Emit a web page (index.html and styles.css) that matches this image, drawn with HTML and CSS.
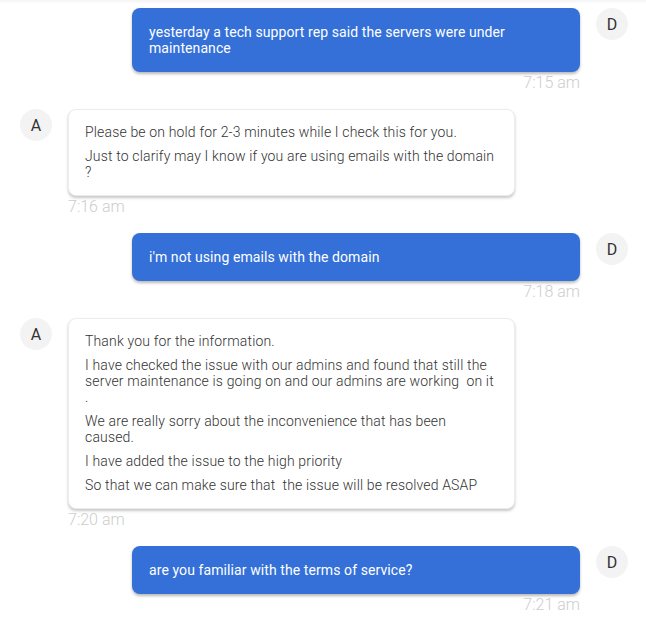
FILE: index.html
```html
<!DOCTYPE html>
<html>
<head>
<meta charset="utf-8">
<link rel="stylesheet" href="styles.css">
</head>
<body>
<div class="chat">
  <div class="msg user">
    <div class="row">
      <div class="bubble">yesterday a tech support rep said the servers were under maintenance</div>
      <div class="avatar">D</div>
    </div>
    <div class="time">7:15 am</div>
  </div>

  <div class="msg agent">
    <div class="row">
      <div class="avatar">A</div>
      <div class="bubble">
        <p>Please be on hold for 2-3 minutes while I check this for you.</p>
        <p>Just to clarify may I know if you are using emails with the domain ?</p>
      </div>
    </div>
    <div class="time">7:16 am</div>
  </div>

  <div class="msg user">
    <div class="row">
      <div class="bubble">i'm not using emails with the domain</div>
      <div class="avatar">D</div>
    </div>
    <div class="time">7:18 am</div>
  </div>

  <div class="msg agent">
    <div class="row">
      <div class="avatar">A</div>
      <div class="bubble">
        <p>Thank you for the information.</p>
        <p>I have checked the issue with our admins and found that still the server maintenance is going on and our admins are working&nbsp; on it .</p>
        <p>We are really sorry about the inconvenience that has been caused.</p>
        <p>I have added the issue to the high priority</p>
        <p>So that we can make sure that&nbsp; the issue will be resolved ASAP</p>
      </div>
    </div>
    <div class="time">7:20 am</div>
  </div>

  <div class="msg user">
    <div class="row">
      <div class="bubble">are you familiar with the terms of service?</div>
      <div class="avatar">D</div>
    </div>
    <div class="time">7:21 am</div>
  </div>
</div>
</body>
</html>
```

FILE: styles.css
```css
html, body {
  margin: 0;
  padding: 0;
  background: #fff;
}
body {
  font-family: Roboto, "Liberation Sans", sans-serif;
  width: 646px;
  height: 619px;
  overflow: hidden;
  background: linear-gradient(#f4f4f4, #fff 4px);
}
.chat {
  display: flex;
  flex-direction: column;
  padding-top: 8px;
}
.msg {
  display: flex;
  flex-direction: column;
  margin-bottom: 16px;
}
.row {
  display: flex;
  align-items: flex-start;
}
.user .row {
  justify-content: flex-end;
  padding-right: 18px;
}
.agent .row {
  padding-left: 20px;
}
.avatar {
  width: 32px;
  height: 32px;
  border-radius: 50%;
  background: #f3f3f3;
  color: #333;
  font-size: 16px;
  display: flex;
  align-items: center;
  justify-content: center;
  flex: none;
}
.user .avatar {
  margin-left: 16px;
}
.agent .avatar {
  margin-right: 16px;
}
.bubble {
  box-sizing: border-box;
  width: 448px;
  border-radius: 8px;
  font-size: 14px;
  line-height: 16px;
}
.user .bubble {
  background: #3470d8;
  color: #fff;
  padding: 16px 17px;
  letter-spacing: 0.09px;
  box-shadow: 0 2px 3px rgba(0, 0, 0, 0.28);
}
.agent .bubble {
  width: 447px;
  background: #fff;
  color: #333;
  font-weight: 300;
  letter-spacing: 0.16px;
  padding: 14px 16px 15px 16px;
  border: 1px solid #ececec;
  box-shadow: 0 2px 3px rgba(0, 0, 0, 0.22);
}
.agent .bubble p {
  margin: 0 0 8px 0;
}
.agent .bubble p:last-child {
  margin-bottom: 0;
}
.time {
  font-size: 16px;
  font-weight: 300;
  line-height: 21px;
  color: #cdcdcd;
}
.user .time {
  text-align: right;
  padding-right: 66px;
}
.agent .time {
  padding-left: 68px;
}
```
